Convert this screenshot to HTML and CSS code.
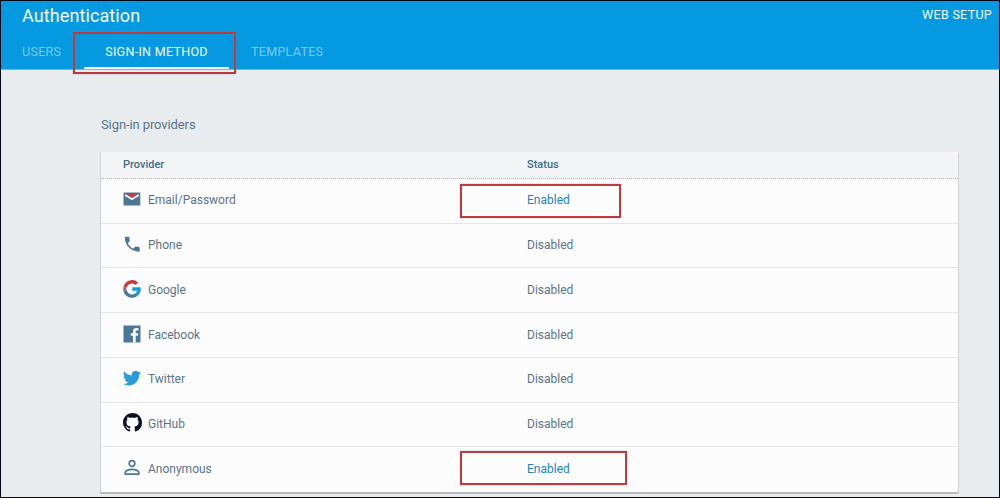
FILE: index.html
```html
<!DOCTYPE html>
<html lang="en">
<head>
<meta charset="utf-8">
<title>Authentication</title>
<link rel="stylesheet" href="styles.css">
</head>
<body>
<div class="app">
  <header class="header">
    <div class="title-row"><h1 class="title">Authentication</h1><a class="setup">WEB SETUP</a></div>
    <nav class="tabs">
      <a class="tab users">USERS</a>
      <a class="tab active"><span class="method">SIGN-IN METHOD</span><span class="mark mark-tab"></span></a>
      <a class="tab templates">TEMPLATES</a>
    </nav>
  </header>
  <main class="content">
    <h2 class="section-title">Sign-in providers</h2>
    <div class="table">
      <div class="row head"><span class="provider">Provider</span><span class="status">Status</span></div>
      <div class="row">
        <svg class="icon" viewBox="0 0 18 18"><path fill="#4c7796" d="M.5 2.5h16.8v13H.5z"/><path fill="#b9434b" d="M3 3h12v1.5L9 8.1 3 4.5z"/><path fill="none" stroke="#fcfcfc" stroke-width="1.7" d="M2.2 5L9 9.2 15.8 5"/></svg>
        <span class="provider">Email/Password</span><span class="status enabled">Enabled<span class="mark mark-email"></span></span>
      </div>
      <div class="row">
        <svg class="icon" viewBox="0 0 18 18"><path fill="#4c7796" transform="translate(-.7 -.8) scale(.83)" d="M6.62 10.79c1.44 2.83 3.76 5.14 6.59 6.59l2.2-2.2c.27-.27.67-.36 1.02-.24 1.12.37 2.33.57 3.57.57.55 0 1 .45 1 1V20c0 .55-.45 1-1 1C10.61 21 3 13.39 3 4c0-.55.45-1 1-1h3.5c.55 0 1 .45 1 1 0 1.25.2 2.45.57 3.57.11.35.03.74-.25 1.02z"/></svg>
        <span class="provider">Phone</span><span class="status">Disabled</span>
      </div>
      <div class="row">
        <svg class="icon" viewBox="0 0 18 18"><g fill="none" stroke-width="3.3"><path stroke="#c5393d" d="M2.1 7A7.3 7.3 0 0 1 14 3.7"/><path stroke="#93717e" d="M2.1 7a7.3 7.3 0 0 0 0 4"/><path stroke="#4c7796" d="M2.1 11A7.3 7.3 0 0 0 13.7 14.5"/><path stroke="#159bdc" d="M13.7 14.5A7.2 7.2 0 0 0 16.1 9H9.3"/></g></svg>
        <span class="provider">Google</span><span class="status">Disabled</span>
      </div>
      <div class="row">
        <svg class="icon" viewBox="0 0 18 18"><path fill="#4c7796" d="M.5.5h17v17h-17z"/><path fill="#fcfcfc" d="M10 17.5v-6.7H7.8V8.2H10V6.3C10 4 11.4 3 13.4 3h2v2.5H14c-1 0-1.3.5-1.3 1.3v1.4h2.6l-.4 2.6h-2.2v6.7z"/></svg>
        <span class="provider">Facebook</span><span class="status">Disabled</span>
      </div>
      <div class="row">
        <svg class="icon" viewBox="0 0 18 18"><path fill="#299bd8" transform="translate(0 .2) scale(.75)" d="M23.95 4.57a10 10 0 0 1-2.82.77 4.96 4.96 0 0 0 2.16-2.72c-.95.55-2 .95-3.13 1.18a4.92 4.92 0 0 0-8.38 4.48C7.69 8.1 4.07 6.13 1.64 3.16a4.93 4.93 0 0 0 1.52 6.57 4.9 4.9 0 0 1-2.23-.61v.06a4.92 4.92 0 0 0 3.95 4.83 5 5 0 0 1-2.21.08 4.94 4.94 0 0 0 4.6 3.42A9.87 9.87 0 0 1 0 19.54a14 14 0 0 0 7.55 2.21c9.05 0 14-7.5 14-13.98 0-.21 0-.42-.02-.63a9.94 9.94 0 0 0 2.46-2.55z"/></svg>
        <span class="provider">Twitter</span><span class="status">Disabled</span>
      </div>
      <div class="row">
        <svg class="icon github" viewBox="0 0 16 16"><path fill="#071222" d="M8 0C3.58 0 0 3.58 0 8c0 3.54 2.29 6.53 5.47 7.59.4.07.55-.17.55-.38 0-.19-.01-.82-.01-1.49-2.01.37-2.53-.49-2.69-.94-.09-.23-.48-.94-.82-1.13-.28-.15-.68-.52-.01-.53.63-.01 1.08.58 1.23.82.72 1.21 1.87.87 2.33.66.07-.52.28-.87.51-1.07-1.78-.2-3.64-.89-3.64-3.95 0-.87.31-1.59.82-2.15-.08-.2-.36-1.02.08-2.12 0 0 .67-.21 2.2.82a7.6 7.6 0 0 1 4 0c1.53-1.04 2.2-.82 2.2-.82.44 1.1.16 1.92.08 2.12.51.56.82 1.27.82 2.15 0 3.07-1.87 3.75-3.65 3.95.29.25.54.73.54 1.48 0 1.07-.01 1.93-.01 2.2 0 .21.15.46.55.38A8.01 8.01 0 0 0 16 8c0-4.42-3.58-8-8-8z"/></svg>
        <span class="provider">GitHub</span><span class="status">Disabled</span>
      </div>
      <div class="row">
        <svg class="icon" viewBox="0 0 18 18"><g fill="none" stroke="#4c7796" stroke-width="1.7"><circle cx="9" cy="4.5" r="2.8"/><path d="M2.3 15.2v-1.8c0-2 4.2-3.1 6.7-3.1s6.7 1.1 6.7 3.1v1.8z"/></g></svg>
        <span class="provider">Anonymous</span><span class="status enabled">Enabled<span class="mark mark-anon"></span></span>
      </div>
    </div>
  </main>
</div>
</body>
</html>
```
FILE: styles.css
```css
* { box-sizing: border-box; }
body { margin: 0; font-family: Roboto, "Liberation Sans", sans-serif; color: #5a7487; }
.app { width: 1000px; height: 498px; border: 1px solid #030814; background: #e8ecef; overflow: hidden; }
.header { height: 69px; background: #0599e2; border-bottom: 1px solid #62bdeb; color: #f4fafd; padding: 0 7px 0 21px; }
.title-row { height: 33px; display: flex; justify-content: space-between; line-height: 28px; }
.title { margin: 0; font-size: 18px; font-weight: 400; letter-spacing: .1px; line-height: 29px; }
.setup { font-size: 12.5px; font-weight: 400; letter-spacing: .3px; }
.tabs { height: 35px; display: flex; }
.tab { font-size: 12.5px; font-weight: 400; letter-spacing: .3px; line-height: 35px; color: #7fc9ee; }
.users { width: 62px; }
.active { position: relative; width: 145px; text-align: center; color: #f4fafd; border-bottom: 2px solid #f4fafd; }
.templates { margin-left: 22px; }
.mark { position: absolute; border: 2px solid #bf3a3e; box-shadow: 0 0 1px #8f8488; }
.mark-tab { left: -11px; top: -2px; width: 163px; height: 42px; }
.content { padding: 45px 40px 0 99px; }
.section-title { margin: 0; height: 37px; line-height: 20px; padding-left: 1px; font-size: 13px; font-weight: 400; letter-spacing: -.1px; }
.table { width: 859px; height: 342px; display: flex; flex-direction: column; background: #fcfcfc; border: 1px dotted #aaa8ad; border-top: 0; border-bottom: 2px solid #bcb7b8; border-radius: 1px; }
.row { flex: 1; display: flex; align-items: center; padding: 0 0 1px 22px; font-size: 12px; border-bottom: 1px solid #e4e7e9; }
.row:last-child { border-bottom: 0; padding-bottom: 2px; }
.head { flex: 0 0 27px; background: #f2f4f5; border-bottom: 1px dotted #b0b0b3; padding-bottom: 2px; font-size: 11px; font-weight: 500; color: #416d8b; }
.row + .row { margin-top: -1px; padding-top: 0; }
.icon { width: 18px; height: 18px; margin-right: 7px; margin-top: -2px; flex: none; }
.github { width: 19px; height: 19px; margin-right: 6px; }
.provider { width: 379px; }
.head .provider { width: 404px; }
.status { position: relative; }
.enabled { color: #2383bb; }
.row + .row { margin-top: 0; }
.mark-email { left: -67px; top: -9px; width: 161px; height: 34px; }
.mark-anon { left: -67px; top: -11px; width: 167px; height: 34px; }
```
